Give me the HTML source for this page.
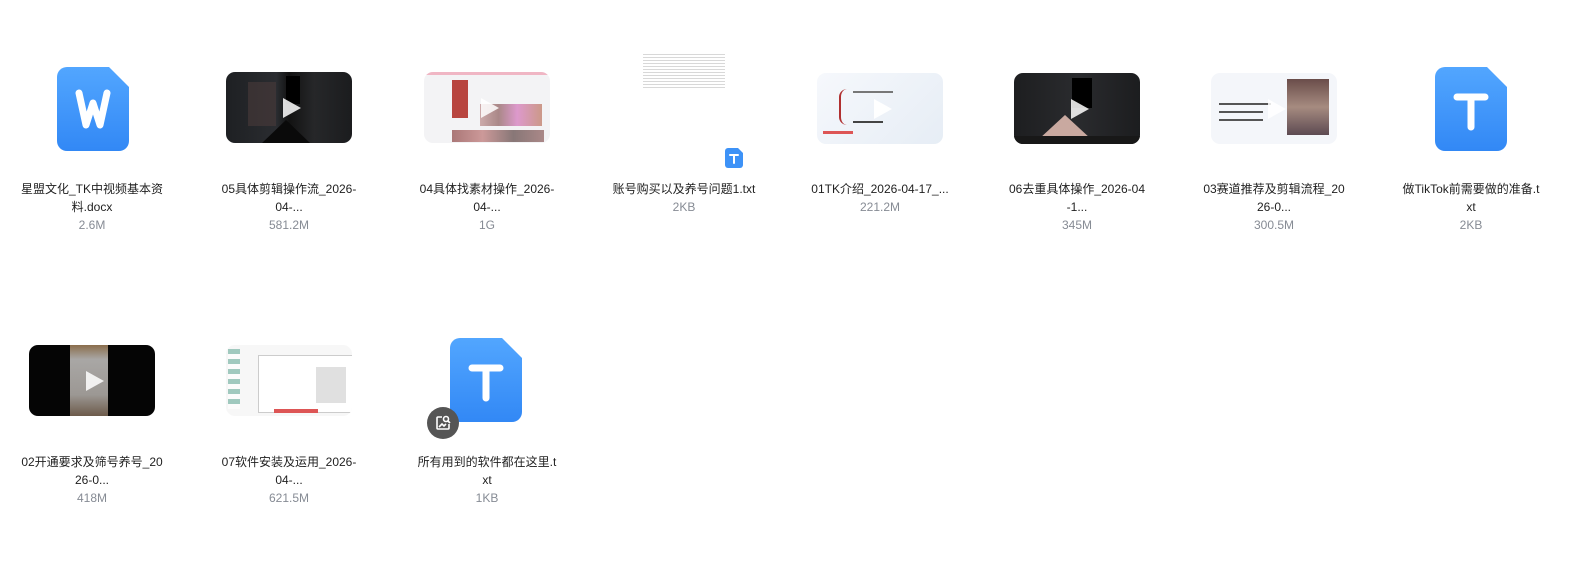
<!DOCTYPE html>
<html><head><meta charset="utf-8"><style>
body{margin:0;width:1593px;height:582px;background:#fff;position:relative;overflow:hidden;font-family:"Liberation Sans","Noto Sans CJK SC",sans-serif}
.a{position:absolute}
.t{position:absolute;width:190px;text-align:center;font-size:12px;line-height:18px;color:#1f1f1f}
.s{color:#868b94}
.th{position:absolute;width:126px;height:71px;border-radius:9px;overflow:hidden}
.play{position:absolute;left:50%;top:50%;width:0;height:0;margin:-10px 0 0 -6px;border-left:18px solid rgba(255,255,255,.85);border-top:10px solid transparent;border-bottom:10px solid transparent}
</style></head><body>

<svg class="a" style="left:57px;top:67px" width="72" height="84" viewBox="0 0 72 84"><defs><linearGradient id="g" x1="0" y1="0" x2="0" y2="1"><stop offset="0" stop-color="#52a6ff"/><stop offset="1" stop-color="#3288f5"/></linearGradient></defs><path d="M10 0H52L72 20V74A10 10 0 0 1 62 84H10A10 10 0 0 1 0 74V10A10 10 0 0 1 10 0Z" fill="url(#g)"/><path d="M22 26L29 58L36 36L43 58L50 26" fill="none" stroke="#fff" stroke-width="7" stroke-linecap="round" stroke-linejoin="round"/></svg>
<div class="t" style="left:-3px;top:180px">星盟文化_TK中视频基本资<br>料.docx<br><span class="s">2.6M</span></div>

<div class="th" style="left:226px;top:72px;background:linear-gradient(90deg,#1e2023 0%,#2a2c30 40%,#121212 50%,#262729 70%,#1b1c1e 100%)"><div class="a" style="left:22px;top:10px;width:28px;height:44px;background:#4a3a3a;opacity:.6"></div><div class="a" style="left:60px;top:4px;width:14px;height:28px;background:#000"></div><div class="a" style="left:35px;top:48px;width:0;height:0;border-left:25px solid transparent;border-right:25px solid transparent;border-bottom:24px solid #0a0a0a"></div><div class="play"></div></div>
<div class="t" style="left:194px;top:180px">05具体剪辑操作流_2026-<br>04-...<br><span class="s">581.2M</span></div>

<div class="th" style="left:424px;top:72px;background:#f3f3f5"><div class="a" style="left:0;top:0;width:126px;height:3px;background:#f0b6c4"></div><div class="a" style="left:28px;top:8px;width:16px;height:38px;background:#b8453f"></div><div class="a" style="left:56px;top:32px;width:62px;height:22px;background:linear-gradient(90deg,#caa 0,#a88 30%,#d9c 60%,#c98 100%)"></div><div class="a" style="left:28px;top:58px;width:92px;height:12px;background:linear-gradient(90deg,#a77,#c99,#877,#a88)"></div><div class="play"></div></div>
<div class="t" style="left:392px;top:180px">04具体找素材操作_2026-<br>04-...<br><span class="s">1G</span></div>

<div class="a" style="left:643px;top:54px;width:82px;height:36px;background:repeating-linear-gradient(180deg,#c8c8c8 0 1px,#fff 1px 3px);opacity:.7"></div>
<svg class="a" style="left:725px;top:148px" width="18" height="20" viewBox="0 0 18 20"><path d="M3 0H13L18 5V17A3 3 0 0 1 15 20H3A3 3 0 0 1 0 17V3A3 3 0 0 1 3 0Z" fill="#3d92f7"/><path d="M5 7H13M9 7V15" stroke="#fff" stroke-width="2" stroke-linecap="round"/></svg>
<div class="t" style="left:589px;top:180px">账号购买以及养号问题1.txt<br><span class="s">2KB</span></div>

<div class="th" style="left:817px;top:73px;background:linear-gradient(135deg,#f6f8fc,#e6edf5)"><div class="a" style="left:22px;top:16px;width:8px;height:36px;border-left:2px solid #b03030;border-radius:8px 0 0 8px"></div><div class="a" style="left:36px;top:18px;width:40px;height:2px;background:#777"></div><div class="a" style="left:36px;top:48px;width:30px;height:2px;background:#444"></div><div class="a" style="left:6px;top:58px;width:30px;height:3px;background:#d55"></div><div class="play" style="border-left-color:rgba(255,255,255,.95)"></div></div>
<div class="t" style="left:785px;top:180px">01TK介绍_2026-04-17_...<br><span class="s">221.2M</span></div>

<div class="th" style="left:1014px;top:73px;background:linear-gradient(90deg,#1d1e20,#2a2b2e 50%,#1c1d1f)"><div class="a" style="left:58px;top:5px;width:20px;height:30px;background:#000"></div><div class="a" style="left:25px;top:42px;width:0;height:0;border-left:26px solid transparent;border-right:26px solid transparent;border-bottom:24px solid #c9a9a0"></div><div class="a" style="left:0;top:63px;width:126px;height:8px;background:#181818"></div><div class="play"></div></div>
<div class="t" style="left:982px;top:180px">06去重具体操作_2026-04<br>-1...<br><span class="s">345M</span></div>

<div class="th" style="left:1211px;top:73px;background:#f4f6fa"><div class="a" style="left:76px;top:6px;width:42px;height:56px;background:linear-gradient(180deg,#6a4d4a,#a68b80,#5d4a52)"></div><div class="a" style="left:8px;top:30px;width:52px;height:2px;background:#555"></div><div class="a" style="left:8px;top:38px;width:44px;height:2px;background:#555"></div><div class="a" style="left:8px;top:46px;width:44px;height:2px;background:#555"></div><div class="play"></div></div>
<div class="t" style="left:1179px;top:180px">03赛道推荐及剪辑流程_20<br>26-0...<br><span class="s">300.5M</span></div>

<svg class="a" style="left:1435px;top:67px" width="72" height="84" viewBox="0 0 72 84"><path d="M10 0H52L72 20V74A10 10 0 0 1 62 84H10A10 10 0 0 1 0 74V10A10 10 0 0 1 10 0Z" fill="url(#g)"/><path d="M22 30H50M36 30V60" stroke="#fff" stroke-width="7" stroke-linecap="round"/></svg>
<div class="t" style="left:1376px;top:180px">做TikTok前需要做的准备.t<br>xt<br><span class="s">2KB</span></div>

<div class="th" style="left:29px;top:345px;background:#050505"><div class="a" style="left:41px;top:0;width:38px;height:71px;background:linear-gradient(180deg,#8a6d4c,#a9a7a5 20%,#9c9894 70%,#6c5a4a)"></div><div class="play"></div></div>
<div class="t" style="left:-3px;top:453px">02开通要求及筛号养号_20<br>26-0...<br><span class="s">418M</span></div>

<div class="th" style="left:226px;top:345px;background:#f7f7f7"><div class="a" style="left:32px;top:10px;width:94px;height:56px;background:#fff;border:1px solid #ccc"></div><div class="a" style="left:90px;top:22px;width:30px;height:36px;background:#e0e0e0"></div><div class="a" style="left:2px;top:4px;width:12px;height:60px;background:repeating-linear-gradient(180deg,#6a9 0 5px,#fff 5px 10px);opacity:.6"></div><div class="a" style="left:48px;top:64px;width:44px;height:4px;background:#d55"></div><div class="play"></div></div>
<div class="t" style="left:194px;top:453px">07软件安装及运用_2026-<br>04-...<br><span class="s">621.5M</span></div>

<svg class="a" style="left:450px;top:338px" width="72" height="84" viewBox="0 0 72 84"><path d="M10 0H52L72 20V74A10 10 0 0 1 62 84H10A10 10 0 0 1 0 74V10A10 10 0 0 1 10 0Z" fill="url(#g)"/><path d="M22 30H50M36 30V60" stroke="#fff" stroke-width="7" stroke-linecap="round"/></svg>
<div class="a" style="left:427px;top:407px;width:32px;height:32px;border-radius:50%;background:#555"></div>
<svg class="a" style="left:434px;top:414px" width="18" height="18" viewBox="0 0 18 18" fill="none" stroke="#fff" stroke-width="1.6"><path d="M8 3H4A1 1 0 0 0 3 4V14A1 1 0 0 0 4 15H14A1 1 0 0 0 15 14V10"/><circle cx="12" cy="5" r="2.5"/><path d="M14 7L16 9M5 13L8 10L10 12L12 10"/></svg>
<div class="t" style="left:392px;top:453px">所有用到的软件都在这里.t<br>xt<br><span class="s">1KB</span></div>

</body></html>
